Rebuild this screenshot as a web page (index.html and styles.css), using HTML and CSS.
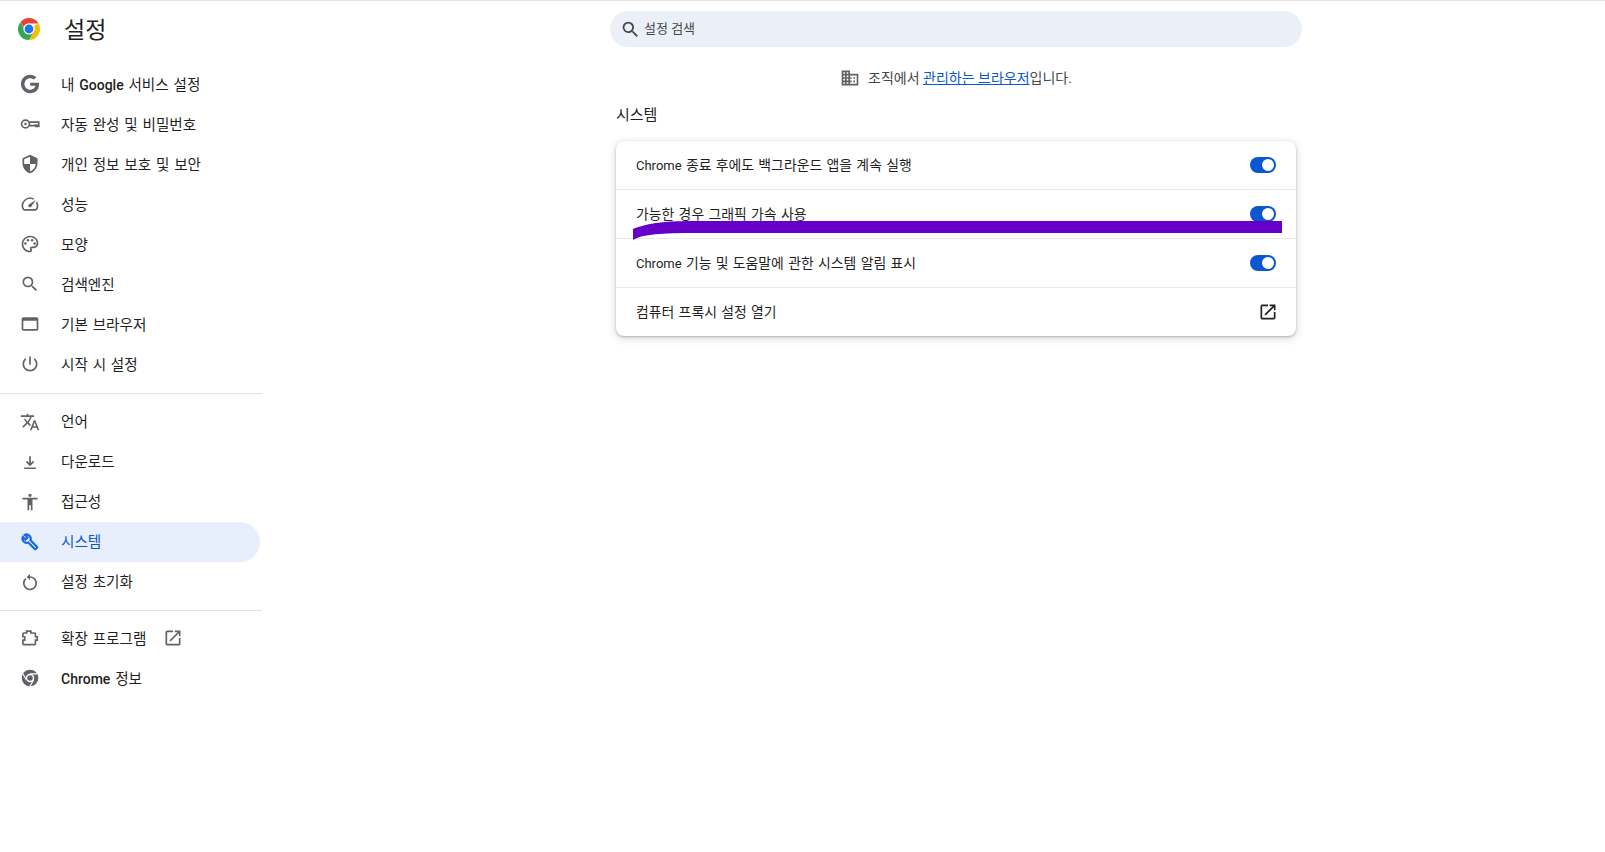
FILE: index.html
```html
<!DOCTYPE html>
<html lang="ko">
<head>
<meta charset="utf-8">
<title>설정</title>
<link rel="stylesheet" href="styles.css">
</head>
<body>
<div class="app">
  <aside class="sidebar">
    <header class="brand">
      <svg class="logo" viewBox="0 0 24 24">
        <path fill="#ea4335" d="M12 1a11 11 0 0 1 9.530 5.500H12a5.500 5.500 0 0 0-5.200 3.700L3.600 4.900A11 11 0 0 1 12 1z"/>
        <path fill="#fbbc04" d="M21.530 6.500A11 11 0 0 1 12 23l4.760-8.250A5.500 5.500 0 0 0 16.760 9.250L21.530 6.500z"/>
        <path fill="#34a853" d="M3.600 4.900l4.630 8.850A5.500 5.500 0 0 0 16.760 14.750L12 23A11 11 0 0 1 3.600 4.900z"/>
        <circle cx="12" cy="12" r="5.600" fill="#fff"/>
        <circle cx="12" cy="12" r="4.400" fill="#1a73e8"/>
      </svg>
      <h1 class="brand-title">설정</h1>
    </header>
    <nav class="nav">
      <a class="nav-item"><svg class="icon" viewBox="-1 -1 26 26"><path d="M12.240 10.285V14.400h6.806c-.275 1.765-2.056 5.174-6.806 5.174-4.095 0-7.439-3.389-7.439-7.574s3.345-7.574 7.439-7.574c2.330 0 3.891.989 4.785 1.849l3.254-3.138C18.189 1.186 15.479 0 12.240 0c-6.635 0-12 5.365-12 12s5.365 12 12 12c6.926 0 11.520-4.869 11.520-11.726 0-.788-.085-1.390-.189-1.989H12.240z"/></svg><span>내 <b class="latin">Google</b> 서비스 설정</span></a>
      <a class="nav-item"><svg class="icon" viewBox="0 0 24 24"><circle class="outline" cx="6.600" cy="12" r="4.700"/><path class="outline" d="M11.200 9.800H22.500V15H19V14H11.200"/><path d="M17.500 12.500h4.500v2h-4.500z"/><circle cx="6.600" cy="12" r="1.500"/></svg><span>자동 완성 및 비밀번호</span></a>
      <a class="nav-item"><svg class="icon" viewBox="0 0 24 24"><path d="M12 1L3 5v6c0 5.550 3.840 10.740 9 12 5.160-1.260 9-6.450 9-12V5l-9-4zm0 10.990h7c-.53 4.120-3.280 7.790-7 8.940V12H5V6.300l7-3.110v8.800z"/></svg><span>개인 정보 보호 및 보안</span></a>
      <a class="nav-item"><svg class="icon" viewBox="0 0 24 24"><path d="M20.380 8.570l-1.230 1.850a8 8 0 0 1-.220 7.580H5.070A8 8 0 0 1 15.580 6.850l1.850-1.230A10 10 0 0 0 3.350 19a2 2 0 0 0 1.720 1h13.850a2 2 0 0 0 1.740-1 10 10 0 0 0-.270-10.440zm-9.790 6.840a2 2 0 0 0 2.830 0l5.660-8.490-8.490 5.660a2 2 0 0 0 0 2.830z"/></svg><span>성능</span></a>
      <a class="nav-item"><svg class="icon" viewBox="0 0 24 24"><path d="M12 22C6.490 22 2 17.510 2 12S6.490 2 12 2s10 4.040 10 9c0 3.310-2.690 6-6 6h-1.770c-.28 0-.5.22-.5.5 0 .12.05.23.13.33.41.47.64 1.060.64 1.670A2.500 2.500 0 0 1 12 22zm0-18c-4.410 0-8 3.590-8 8s3.590 8 8 8c.28 0 .5-.22.5-.5a.54.54 0 0 0-.14-.35c-.41-.46-.63-1.050-.63-1.650a2.500 2.500 0 0 1 2.500-2.500H16c2.210 0 4-1.790 4-4 0-3.860-3.590-7-8-7z"/><circle cx="6.500" cy="11.500" r="1.500"/><circle cx="9.500" cy="7.500" r="1.500"/><circle cx="14.500" cy="7.500" r="1.500"/><circle cx="17.500" cy="11.500" r="1.500"/></svg><span>모양</span></a>
      <a class="nav-item"><svg class="icon" viewBox="0 0 24 24"><path d="M15.500 14h-.79l-.28-.27A6.471 6.471 0 0 0 16 9.500 6.500 6.500 0 1 0 9.500 16c1.610 0 3.090-.59 4.230-1.570l.27.28v.79l5 4.990L20.490 19l-4.990-5zm-6 0C7.010 14 5 11.990 5 9.500S7.010 5 9.500 5 14 7.010 14 9.500 11.990 14 9.500 14z"/></svg><span>검색엔진</span></a>
      <a class="nav-item"><svg class="icon" viewBox="0 0 24 24"><path d="M20 4H4c-1.100 0-2 .9-2 2v12c0 1.100.9 2 2 2h16c1.100 0 2-.9 2-2V6c0-1.100-.9-2-2-2zm0 14H4V8h16v10z"/></svg><span>기본 브라우저</span></a>
      <a class="nav-item"><svg class="icon" viewBox="0 0 24 24"><path d="M13 3h-2v10h2V3zm4.830 2.170l-1.420 1.420C17.990 7.860 19 9.810 19 12c0 3.870-3.130 7-7 7s-7-3.130-7-7c0-2.190 1.010-4.140 2.580-5.420L6.170 5.170C4.230 6.820 3 9.260 3 12c0 4.970 4.030 9 9 9s9-4.030 9-9c0-2.740-1.230-5.180-3.170-6.830z"/></svg><span>시작 시 설정</span></a>
    </nav>
    <hr class="nav-rule">
    <nav class="nav lifted">
      <a class="nav-item"><svg class="icon" viewBox="0 0 24 24"><path d="M12.870 15.070l-2.540-2.510.03-.03c1.740-1.940 2.980-4.170 3.710-6.530H17V4h-7V2H8v2H1v1.990h11.170C11.500 7.920 10.440 9.750 9 11.350 8.070 10.320 7.300 9.190 6.690 8h-2c.73 1.630 1.730 3.170 2.980 4.560l-5.090 5.020L4 19l5-5 3.110 3.110.76-2.040zM18.500 10h-2L12 22h2l1.120-3h4.750L21 22h2l-4.500-12zm-2.620 7l1.620-4.330L19.120 17h-3.240z"/></svg><span>언어</span></a>
      <a class="nav-item"><svg class="icon" viewBox="0 0 24 24"><path d="M11 5h2v8.170l2.590-2.580L17 12l-5 5-5-5 1.410-1.410L11 13.170V5zM5 18.500h14v2H5z"/></svg><span>다운로드</span></a>
      <a class="nav-item"><svg class="icon" viewBox="0 0 24 24"><path d="M12 2c1.100 0 2 .9 2 2s-.9 2-2 2-2-.9-2-2 .9-2 2-2zm9 7h-6v13h-2v-6h-2v6H9V9H3V7h18v2z"/></svg><span>접근성</span></a>
      <a class="nav-item active"><svg class="icon" viewBox="-2 -2 28 28"><path class="outline" d="M21.700 18.600l-9-9c.8-2.300.3-4.700-1.400-6.400C9.500 1.400 7 1 4.800 1.900L8.500 5.600 5.600 8.500 1.900 4.800C1 7 1.400 9.500 3.200 11.300c1.700 1.700 4.100 2.200 6.400 1.400l9 9c.4.4 1 .4 1.400 0l1.700-1.700c.4-.4.4-1 0-1.400z"/></svg><span>시스템</span></a>
      <a class="nav-item"><svg class="icon" viewBox="0 0 24 24"><path class="outline" d="M7 7.900A7.500 7.500 0 1 0 12 6"/><path d="M12 2.500v7l-4-3.500z"/></svg><span>설정 초기화</span></a>
    </nav>
    <hr class="nav-rule last">
    <nav class="nav">
      <a class="nav-item"><svg class="icon" viewBox="0 0 24 24"><path class="outline" d="M4.500 6H8V3.800h5V6h4.500a1 1 0 0 1 1 1v3.500h2.200v4h-2.200V19a1 1 0 0 1-1 1h-13a1 1 0 0 1-1-1v-4.500h2.200v-4H3.500V7a1 1 0 0 1 1-1z"/></svg><span>확장 프로그램</span><svg class="icon ext" viewBox="0 0 24 24"><path d="M19 19H5V5h7V3H5c-1.110 0-2 .9-2 2v14c0 1.100.89 2 2 2h14c1.100 0 2-.9 2-2v-7h-2v7zM14 3v2h3.590l-9.830 9.830 1.410 1.410L19 6.410V10h2V3h-7z"/></svg></a>
      <a class="nav-item"><svg class="icon" viewBox="0 0 24 24"><circle cx="12" cy="12" r="10"/><circle cx="12" cy="12" r="5" fill="#fff"/><circle cx="12" cy="12" r="3.300"/><path class="cuts" d="M12 7h9M7.700 14.500l-4.500-7.800M16.300 14.500L11.800 22.300"/></svg><span><b class="latin">Chrome</b> 정보</span></a>
    </nav>
  </aside>

  <main class="main">
    <div class="search">
      <svg class="search-icon" viewBox="0 0 24 24"><path d="M15.500 14h-.79l-.28-.27A6.471 6.471 0 0 0 16 9.500 6.500 6.500 0 1 0 9.500 16c1.610 0 3.090-.59 4.230-1.570l.27.28v.79l5 4.990L20.490 19l-4.990-5zm-6 0C7.010 14 5 11.990 5 9.500S7.010 5 9.500 5 14 7.010 14 9.500 11.990 14 9.500 14z"/></svg>
      <span class="search-text">설정 검색</span>
    </div>
    <p class="managed">
      <svg class="managed-icon" viewBox="0 0 24 24"><path d="M12 7V3H2v18h20V7H12zM6 19H4v-2h2v2zm0-4H4v-2h2v2zm0-4H4V9h2v2zm0-4H4V5h2v2zm4 12H8v-2h2v2zm0-4H8v-2h2v2zm0-4H8V9h2v2zm0-4H8V5h2v2zm10 12h-8v-2h2v-2h-2v-2h2v-2h-2V9h8v10zm-2-8h-2v2h2v-2zm0 4h-2v2h2v-2z"/></svg>
      <span class="managed-text">조직에서 <a class="link">관리하는 브라우저</a>입니다.</span>
    </p>
    <h2 class="section-title">시스템</h2>
    <section class="card">
      <div class="row"><span class="row-label"><span class="brand-word">Chrome</span> 종료 후에도 백그라운드 앱을 계속 실행</span><span class="toggle"></span></div>
      <div class="row"><span class="row-label">가능한 경우 그래픽 가속 사용</span><span class="toggle"></span></div>
      <div class="row"><span class="row-label"><span class="brand-word">Chrome</span> 기능 및 도움말에 관한 시스템 알림 표시</span><span class="toggle"></span></div>
      <div class="row"><span class="row-label">컴퓨터 프록시 설정 열기</span><svg class="row-icon" viewBox="0 0 24 24"><path d="M19 19H5V5h7V3H5c-1.110 0-2 .9-2 2v14c0 1.100.89 2 2 2h14c1.100 0 2-.9 2-2v-7h-2v7zM14 3v2h3.590l-9.830 9.830 1.410 1.410L19 6.410V10h2V3h-7z"/></svg></div>
    </section>
    <svg class="scribble" viewBox="0 0 650 19"><path d="M0 8C12 3 28 0 60 0H650V12H60C30 12 10 13 0 19z"/></svg>
  </main>
</div>
</body>
</html>
```
FILE: styles.css
```css
* { box-sizing: border-box; }
html, body { margin: 0; height: 100%; }
body {
  background: #fff;
  color: #1f1f1f;
  font-family: Roboto, "Noto Sans CJK KR", sans-serif;
  font-size: 14px;
  overflow: hidden;
}
.app {
  display: flex;
  height: 852px;
  border-top: 1px solid #e3e3e3;
}
.sidebar { width: 262px; flex: none; }
.brand {
  display: flex;
  align-items: center;
  height: 56px;
  padding-left: 17px;
}
.logo { width: 24px; height: 24px; }
.brand-title {
  margin: 0 0 3px 23px;
  font-size: 23px;
  font-weight: 400;
}
.nav { display: flex; flex-direction: column; }
.nav:first-of-type { padding-top: 7px; }
.nav-item {
  display: flex;
  align-items: center;
  height: 40px;
  width: 260px;
  padding-left: 20px;
  font-size: 14.6px;
  word-spacing: .08em;
  border-radius: 0 20px 20px 0;
}
.nav-item span { margin: 0 0 1px 1px; }
.lifted .nav-item span { margin-bottom: 3px; }
.latin { font-weight: 500; font-size: 14px; }
.nav-item .icon {
  width: 20px;
  height: 20px;
  margin-right: 20px;
  flex: none;
  fill: #5f6368;
}
.nav-item .ext { margin: 0 0 0 17px; }
.active { background: #e7effc; color: #0b57d0; }
.outline { fill: none; stroke: #5f6368; stroke-width: 2; }
.active .icon .outline { stroke: #1a66e0; stroke-width: 3; }
.cuts { fill: none; stroke: #fff; stroke-width: 1.4; }
.nav-rule {
  margin: 9px 0 8px;
  border: 0;
  border-top: 1px solid #e3e3e3;
}
.nav-rule.last { margin: 8px 0 7px; }

.main { position: relative; flex: 1; padding-left: 348px; padding-top: 10px; }
.search {
  display: flex;
  align-items: center;
  width: 692px;
  height: 36px;
  padding-left: 10px;
  border-radius: 18px;
  background: #ebeff8;
}
.search-icon { width: 21px; height: 21px; fill: #444746; }
.search-text { margin: 0 0 3px 3px; font-size: 13px; color: #444746; }
.managed {
  display: flex;
  align-items: center;
  justify-content: center;
  gap: 8px;
  width: 692px;
  height: 22px;
  margin: 20px 0 0;
  font-size: 14px;
  color: #444746;
}
.managed-text { margin-bottom: 2px; }
.managed-icon { width: 20px; height: 20px; fill: #5f6368; }
.link { color: #0b57d0; text-decoration: underline; }
.section-title {
  margin: 15px 0 0 6px;
  height: 22px;
  line-height: 22px;
  font-size: 15px;
  font-weight: 400;
}
.card {
  width: 680px;
  margin: 15px 0 0 6px;
  border-radius: 8px;
  background: #fff;
  box-shadow: 0 1px 2px rgba(60,64,67,.3), 0 2px 6px 2px rgba(60,64,67,.15);
}
.row {
  display: flex;
  align-items: center;
  justify-content: space-between;
  height: 49px;
  padding: 0 20px;
  font-size: 13.9px;
  word-spacing: .06em;
  border-top: 1px solid #e9e9e9;
}
.row:first-child { border-top: 0; height: 48px; }
.row-label { margin-bottom: 2px; }
.brand-word { font-size: 13px; }
.toggle {
  position: relative;
  width: 26px;
  height: 16px;
  border-radius: 8px;
  background: #0b57d0;
}
.toggle::after {
  content: "";
  position: absolute;
  top: 2px;
  right: 2px;
  width: 12px;
  height: 12px;
  border-radius: 50%;
  background: #fff;
}
.row-icon { width: 20px; height: 20px; fill: #1f1f1f; margin-right: -2px; }
.scribble {
  position: absolute;
  left: 371px;
  top: 220px;
  width: 649px;
  height: 19px;
  fill: #6600c8;
}
```
